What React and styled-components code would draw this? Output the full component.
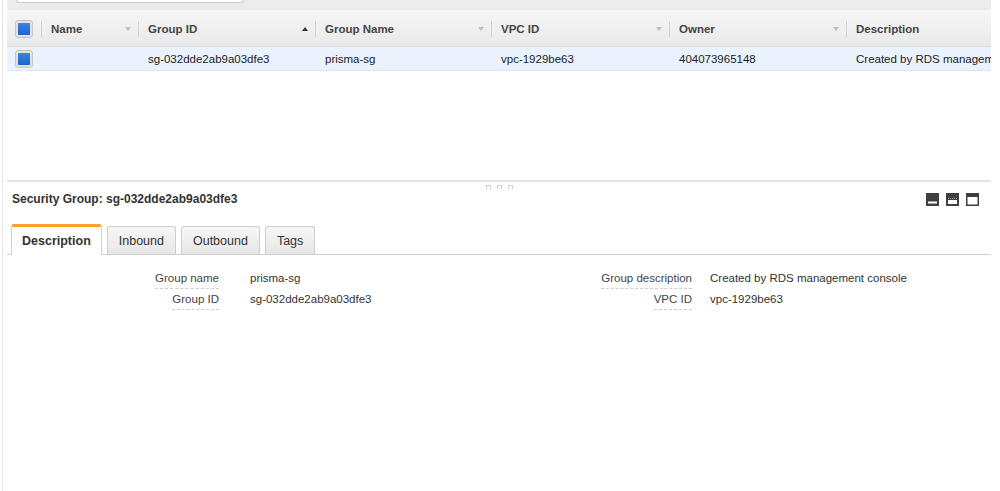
import styled, { createGlobalStyle } from "styled-components";

const GlobalStyle = createGlobalStyle`
  html, body {
    margin: 0;
    padding: 0;
    background: #fff;
  }
  body {
    font-family: "Liberation Sans", Arial, Helvetica, sans-serif;
    color: #333;
  }
`;

const Page = styled.div`
  width: 1000px;
  height: 491px;
  overflow: hidden;
  background: #fff;
`;

const Frame = styled.div`
  margin-left: 2px;
  padding-left: 4px;
  width: 984px;
  height: 491px;
  border-left: 1px solid #e6e6e6;
  display: flex;
  flex-direction: column;
`;

const Toolbar = styled.div`
  height: 10px;
  background: #ececec;
  padding-left: 9px;
`;

const SearchBox = styled.div`
  width: 226px;
  height: 2px;
  background: #fff;
  border: 1px solid #c9c9c9;
  border-top: none;
  border-radius: 0 0 3px 3px;
`;

const TablePanel = styled.div`
  height: 180px;
  flex-shrink: 0;
  display: flex;
  flex-direction: column;
`;

const cols = "34px 97px 177px 176px 178px 177px 145px";

const HeaderRow = styled.div`
  display: grid;
  grid-template-columns: ${cols};
  height: 37px;
  background: linear-gradient(#f6f6f6, #e9e9e9);
  border-top: 1px solid #f9f9f9;
  border-bottom: 1px solid #dcdcdc;
  box-sizing: border-box;
`;

const HeadCell = styled.div`
  position: relative;
  display: flex;
  align-items: center;
  justify-content: space-between;
  padding: 0 7px 0 10px;
  font-size: 11.5px;
  font-weight: bold;
  color: #444;
  &::before {
    content: "";
    position: absolute;
    left: 0;
    top: 10px;
    bottom: 9px;
    width: 1px;
    background: #d2d2d2;
  }
`;

const CheckCell = styled.div`
  display: flex;
  align-items: center;
  padding-left: 9px;
`;

const Check = styled.span`
  width: 12px;
  height: 12px;
  border-radius: 3px;
  border: 2px solid #e2e2e2;
  box-shadow: 0 0 0 1px #c4c4c4;
  background: linear-gradient(#3a86e0, #1d64c8);
`;

const SortArrow = styled.span`
  width: 0;
  height: 0;
  border-left: 3.5px solid transparent;
  border-right: 3.5px solid transparent;
  ${(p) =>
    p.$up
      ? "border-bottom: 4px solid #333;"
      : "border-top: 4px solid #bdbdbd;"}
`;

const DataRow = styled.div`
  display: grid;
  grid-template-columns: ${cols};
  height: 24px;
  background: #eaf2fd;
  border-bottom: 1px solid #dde6f2;
  box-sizing: border-box;
`;

const DataCell = styled.div`
  display: flex;
  align-items: center;
  padding-left: 10px;
  font-size: 11.5px;
  color: #222;
  white-space: nowrap;
  overflow: hidden;
`;

const Divider = styled.div`
  height: 2px;
  flex-shrink: 0;
  background: #e4e4e4;
  display: flex;
  justify-content: center;
`;

const Grip = styled.div`
  display: flex;
  gap: 6px;
  margin-top: 5px;
  margin-left: 0;
`;

const GripDot = styled.span`
  width: 3px;
  height: 3px;
  border: 1px solid #cfcfcf;
  border-bottom: none;
`;

const DetailPanel = styled.div`
  display: flex;
  flex-direction: column;
`;

const TitleRow = styled.div`
  height: 34px;
  display: flex;
  align-items: center;
  justify-content: space-between;
  padding: 0 12px 0 5px;
`;

const Title = styled.div`
  font-size: 12px;
  font-weight: bold;
  color: #333;
`;

const Icons = styled.div`
  display: flex;
  gap: 7px;
  margin-top: 1px;
`;

const TabBar = styled.div`
  margin-top: 8px;
  display: flex;
  align-items: flex-end;
  gap: 5px;
  padding-left: 4px;
  height: 30px;
  border-bottom: 1px solid #cfcfcf;
`;

const Tab = styled.div`
  box-sizing: border-box;
  display: flex;
  align-items: center;
  padding: 0 ${(p) => (p.$active ? "10px" : "11px")};
  font-size: 12.5px;
  font-weight: ${(p) => (p.$active ? "bold" : "normal")};
  color: #333;
  border: 1px solid #cfcfcf;
  border-bottom: none;
  border-top: ${(p) => (p.$active ? "3px solid #f7a326" : "1px solid #cfcfcf")};
  border-radius: 3px 3px 0 0;
  background: ${(p) => (p.$active ? "#fff" : "linear-gradient(#f7f7f7, #e6e6e6)")};
  margin-bottom: ${(p) => (p.$active ? "-1px" : "0")};
  height: ${(p) => (p.$active ? "31px" : "28px")};
`;

const Details = styled.div`
  margin-top: 15px;
  display: grid;
  grid-template-columns: 212px 367px 106px 1fr;
  row-gap: 2px;
`;

const Label = styled.div`
  justify-self: end;
  font-size: 11.5px;
  color: #444;
  line-height: 16px;
  padding-bottom: 2px;
  border-bottom: 1px dashed #cdcdcd;
`;

const Value = styled.div`
  font-size: 11.5px;
  color: #333;
  line-height: 16px;
  padding-left: ${(p) => p.$gap || 31}px;
`;

const PanelIcon = ({ kind }) => (
  <svg width="13" height="13" viewBox="0 0 13 13">
    <rect x="0" y="0" width="13" height="13" fill="#3f3f3f" />
    {kind === 1 && <rect x="2" y="8.5" width="9" height="2" fill="#fff" />}
    {kind === 2 && (
      <>
        <rect x="2" y="7" width="9" height="4" fill="#fff" />
        <line x1="2" y1="5.5" x2="11" y2="5.5" stroke="#bbb" strokeWidth="0.8" strokeDasharray="1 1" />
      </>
    )}
    {kind === 3 && <rect x="1.5" y="4" width="10" height="7.5" fill="#fff" />}
  </svg>
);

const headers = [
  { label: "Name" },
  { label: "Group ID", up: true },
  { label: "Group Name" },
  { label: "VPC ID" },
  { label: "Owner" },
  { label: "Description", noArrow: true },
];

const row = [
  "",
  "sg-032dde2ab9a03dfe3",
  "prisma-sg",
  "vpc-1929be63",
  "404073965148",
  "Created by RDS management console",
];

export default function App() {
  return (
    <Page>
      <GlobalStyle />
      <Frame>
        <TablePanel>
          <Toolbar>
            <SearchBox />
          </Toolbar>
          <HeaderRow>
            <CheckCell>
              <Check />
            </CheckCell>
            {headers.map((h) => (
              <HeadCell key={h.label}>
                <span>{h.label}</span>
                {!h.noArrow && <SortArrow $up={h.up} />}
              </HeadCell>
            ))}
          </HeaderRow>
          <DataRow>
            <CheckCell>
              <Check />
            </CheckCell>
            {row.map((v, i) => (
              <DataCell key={i}>{v}</DataCell>
            ))}
          </DataRow>
        </TablePanel>
        <Divider>
          <Grip>
            <GripDot />
            <GripDot />
            <GripDot />
          </Grip>
        </Divider>
        <DetailPanel>
          <TitleRow>
            <Title>Security Group: sg-032dde2ab9a03dfe3</Title>
            <Icons>
              <PanelIcon kind={1} />
              <PanelIcon kind={2} />
              <PanelIcon kind={3} />
            </Icons>
          </TitleRow>
          <TabBar>
            <Tab $active>Description</Tab>
            <Tab>Inbound</Tab>
            <Tab>Outbound</Tab>
            <Tab>Tags</Tab>
          </TabBar>
          <Details>
            <Label>Group name</Label>
            <Value>prisma-sg</Value>
            <Label>Group description</Label>
            <Value $gap={18}>Created by RDS management console</Value>
            <Label>Group ID</Label>
            <Value>sg-032dde2ab9a03dfe3</Value>
            <Label>VPC ID</Label>
            <Value $gap={18}>vpc-1929be63</Value>
          </Details>
        </DetailPanel>
      </Frame>
    </Page>
  );
}
